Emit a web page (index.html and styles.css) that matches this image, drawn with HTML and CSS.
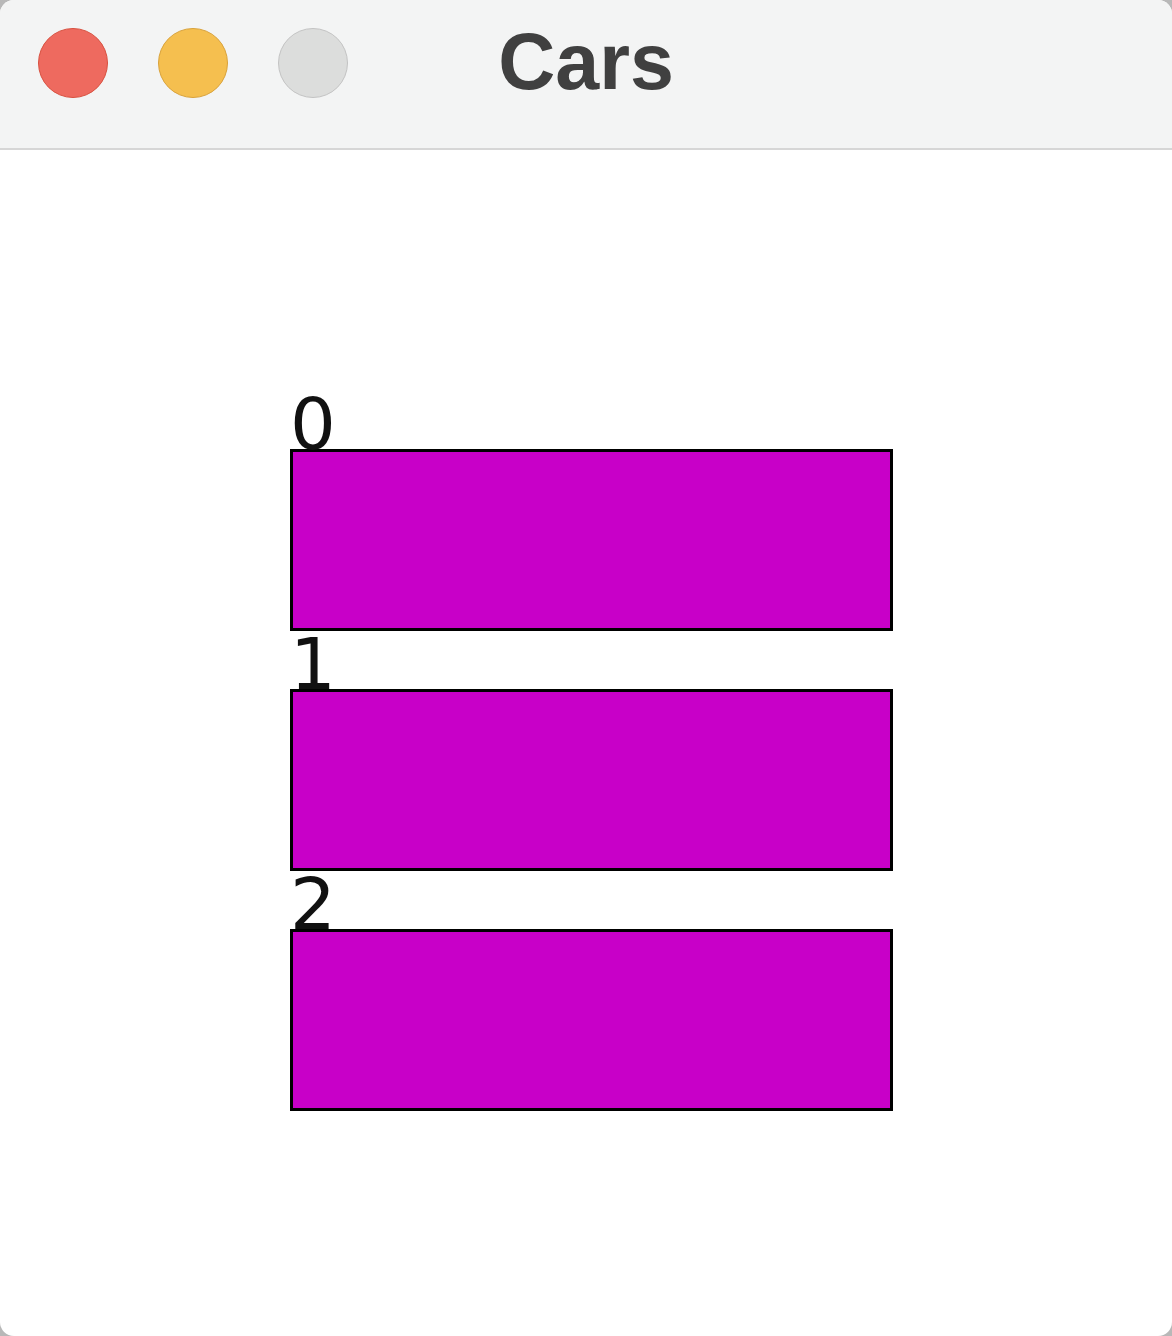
FILE: index.html
```html
<!DOCTYPE html>
<html lang="en">
<head>
    <meta charset="UTF-8">
    <meta name="viewport" content="width=device-width, initial-scale=1.0">
    <title>Cars</title>
    <link rel="stylesheet" href="styles.css">
</head>
<body>
    <div class="window">
        <div class="titlebar">
            <div class="lights">
                <span class="light close"></span>
                <span class="light minimize"></span>
                <span class="light zoom"></span>
            </div>
            <div class="title">Cars</div>
            <div></div>
        </div>
        <div class="canvas">
            <div class="lane">
                <div class="label">0</div>
                <div class="car"></div>
            </div>
            <div class="lane">
                <div class="label">1</div>
                <div class="car"></div>
            </div>
            <div class="lane">
                <div class="label">2</div>
                <div class="car"></div>
            </div>
        </div>
    </div>
</body>
</html>
```

FILE: styles.css
```css
html, body {
    margin: 0;
    height: 100%;
    background-color: #b8b8b8;
}

.window {
    height: 1336px;
    background-color: #ffffff;
    border-radius: 14px;
    overflow: hidden;
    display: flex;
    flex-direction: column;
}

.titlebar {
    height: 150px;
    box-sizing: border-box;
    padding-bottom: 22px;
    background-color: #f3f4f4;
    border-bottom: 2px solid #d6d6d6;
    display: grid;
    grid-template-columns: 1fr auto 1fr;
    align-items: center;
}

.lights {
    display: flex;
    gap: 50px; /* 120px between centres */
    padding-left: 38px;
}

.light {
    width: 70px;
    height: 70px;
    box-sizing: border-box;
    border-radius: 50%;
    border: 1px solid;
}

.close {
    background-color: #ee6a5f;
    border-color: #d8503f;
}

.minimize {
    background-color: #f5bf4f;
    border-color: #d9a23a;
}

.zoom {
    background-color: #dcdddc;
    border-color: #c3c3c3;
}

.title {
    font-family: "Liberation Sans", Arial, sans-serif;
    font-weight: bold;
    font-size: 79px;
    color: #404040;
    line-height: 1;
    margin-top: -4px;
}

.canvas {
    padding: 241px 0 0 290px;
    display: flex;
    flex-direction: column;
}

.label {
    height: 58px;
    line-height: 66px;
    font-family: "DejaVu Sans", sans-serif;
    font-size: 72px;
    color: #111111;
}

.car {
    width: 603px;
    height: 182px;
    box-sizing: border-box;
    background-color: #c800c8;
    border: 3px solid #000000;
}
```
